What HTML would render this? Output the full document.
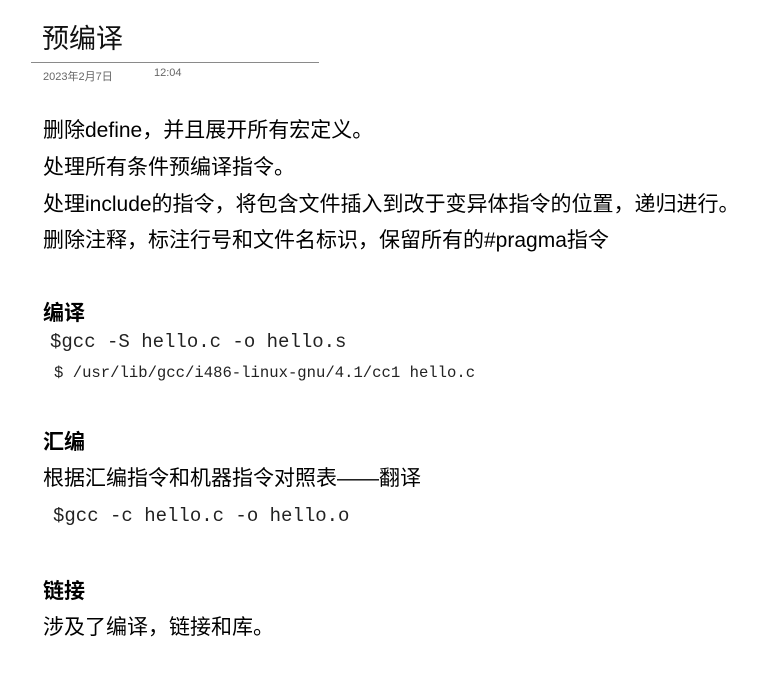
<!DOCTYPE html>
<html><head><meta charset="utf-8"><style>
body{margin:0;background:#fff;width:759px;height:686px;position:relative;overflow:hidden;font-family:"Liberation Sans","Noto Sans CJK SC",sans-serif;color:#000}
.a{position:absolute;white-space:nowrap;line-height:1}
.t{font-size:21px}
.b{font-size:21px;font-weight:bold}
.m{font-family:"Liberation Mono",monospace;color:#222}
</style></head><body>
<div class="a" style="left:42px;top:26px;font-size:27px;color:#111">预编译</div>
<div style="position:absolute;left:31px;top:62px;width:288px;height:1px;background:#8a8a8a"></div>
<div class="a" style="left:43px;top:72px;font-size:11px;color:#666">2023年2月7日</div>
<div class="a" style="left:154px;top:68px;font-size:11px;color:#666">12:04</div>
<div class="a t" style="left:43px;top:120px">删除define，并且展开所有宏定义。</div>
<div class="a t" style="left:43px;top:157px">处理所有条件预编译指令。</div>
<div class="a t" style="left:43px;top:194px">处理include的指令，将包含文件插入到改于变异体指令的位置，递归进行。</div>
<div class="a t" style="left:43px;top:230px">删除注释，标注行号和文件名标识，保留所有的#pragma指令</div>
<div class="a b" style="left:43px;top:303px">编译</div>
<div class="a m" style="left:50px;top:333px;font-size:19px">$gcc -S hello.c -o hello.s</div>
<div class="a m" style="left:54px;top:366px;font-size:15.6px">$ /usr/lib/gcc/i486-linux-gnu/4.1/cc1 hello.c</div>
<div class="a b" style="left:43px;top:432px">汇编</div>
<div class="a t" style="left:43px;top:468px">根据汇编指令和机器指令对照表——翻译</div>
<div class="a m" style="left:53px;top:507px;font-size:19px">$gcc -c hello.c -o hello.o</div>
<div class="a b" style="left:43px;top:581px">链接</div>
<div class="a t" style="left:43px;top:617px">涉及了编译，链接和库。</div>
</body></html>
